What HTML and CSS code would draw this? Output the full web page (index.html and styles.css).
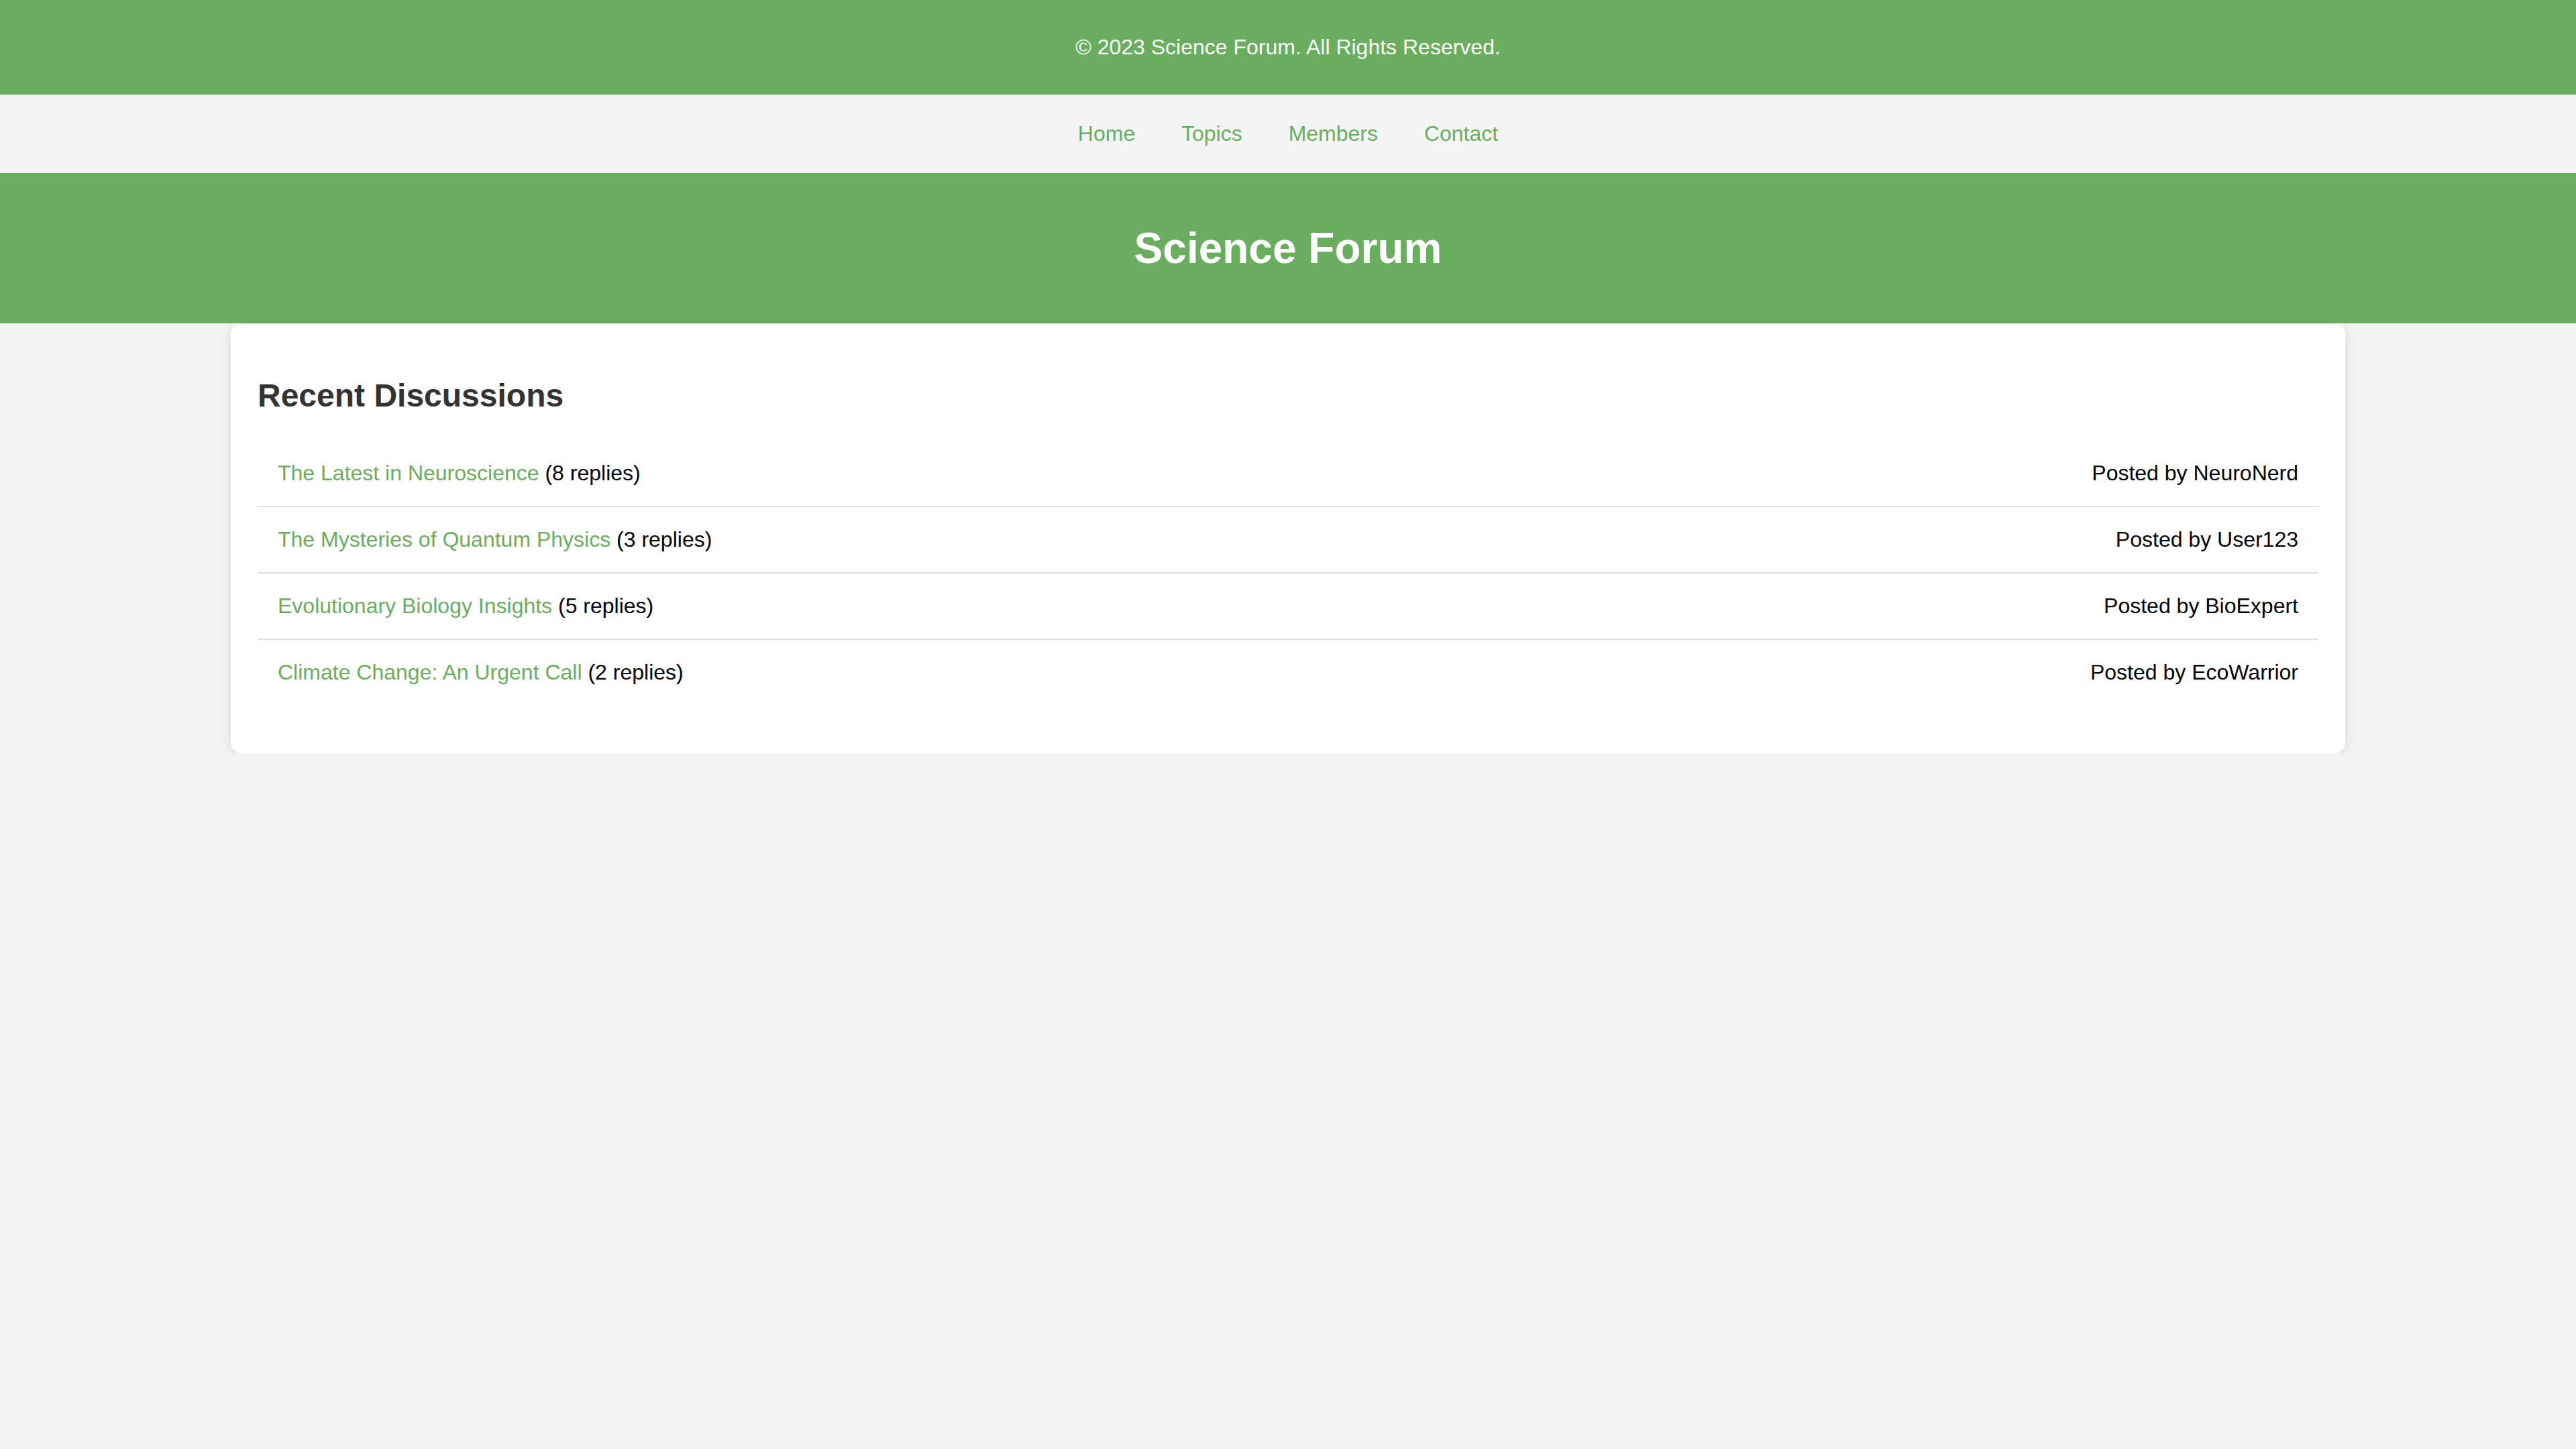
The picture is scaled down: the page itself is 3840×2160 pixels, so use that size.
FILE: index.html
```html
<!DOCTYPE html>
<html lang="en">
<head>
<meta charset="utf-8">
<title>Science Forum</title>
<link rel="stylesheet" href="styles.css">
</head>
<body>
<footer class="site-footer">
  <p>&copy; 2023 Science Forum. All Rights Reserved.</p>
</footer>
<nav class="site-nav">
  <a href="#">Home</a>
  <a href="#">Topics</a>
  <a href="#">Members</a>
  <a href="#">Contact</a>
</nav>
<header class="site-header">
  <h1>Science Forum</h1>
</header>
<main class="container">
  <h2>Recent Discussions</h2>
  <ul class="discussions">
    <li class="discussion"><span><a href="#">The Latest in Neuroscience</a> (8 replies)</span><span>Posted by NeuroNerd</span></li>
    <li class="discussion"><span><a href="#">The Mysteries of Quantum Physics</a> (3 replies)</span><span>Posted by User123</span></li>
    <li class="discussion"><span><a href="#">Evolutionary Biology Insights</a> (5 replies)</span><span>Posted by BioExpert</span></li>
    <li class="discussion"><span><a href="#">Climate Change: An Urgent Call</a> (2 replies)</span><span>Posted by EcoWarrior</span></li>
  </ul>
</main>
</body>
</html>
```
FILE: styles.css
```css
body {
  margin: 0;
  font-family: Arial, "Liberation Sans", sans-serif;
  font-size: 32px;
  background: #f4f4f4;
  color: #000;
}

a {
  color: #69ae5e;
  text-decoration: none;
}

.site-footer {
  background: #69ae5e;
  color: #fff;
  text-align: center;
  padding: 20px;
}

.site-footer p {
  margin: 32px 0;
}

.site-nav {
  background: #f4f4f4;
  text-align: center;
  padding: 40px;
}

.site-nav a {
  margin: 0 30px;
}

.site-header {
  background: #69ae5e;
  color: #fff;
  text-align: center;
  padding: 32px;
}

.site-header h1 {
  font-size: 64px;
  margin: 43px 0;
}

.container {
  width: 80%;
  margin: 0 auto;
  padding: 40px;
  background: #fff;
  border-radius: 16px;
  box-shadow: 0 4px 20px rgba(0, 0, 0, 0.1);
}

.container h2 {
  font-size: 48px;
  color: #333;
  margin: 40px 0;
}

.discussions {
  list-style: none;
  padding: 0;
  margin: 32px 0;
}

.discussion {
  display: flex;
  justify-content: space-between;
  padding: 30px;
  border-bottom: 2px solid #ddd;
}

.discussion:last-child {
  border-bottom: none;
}
```
